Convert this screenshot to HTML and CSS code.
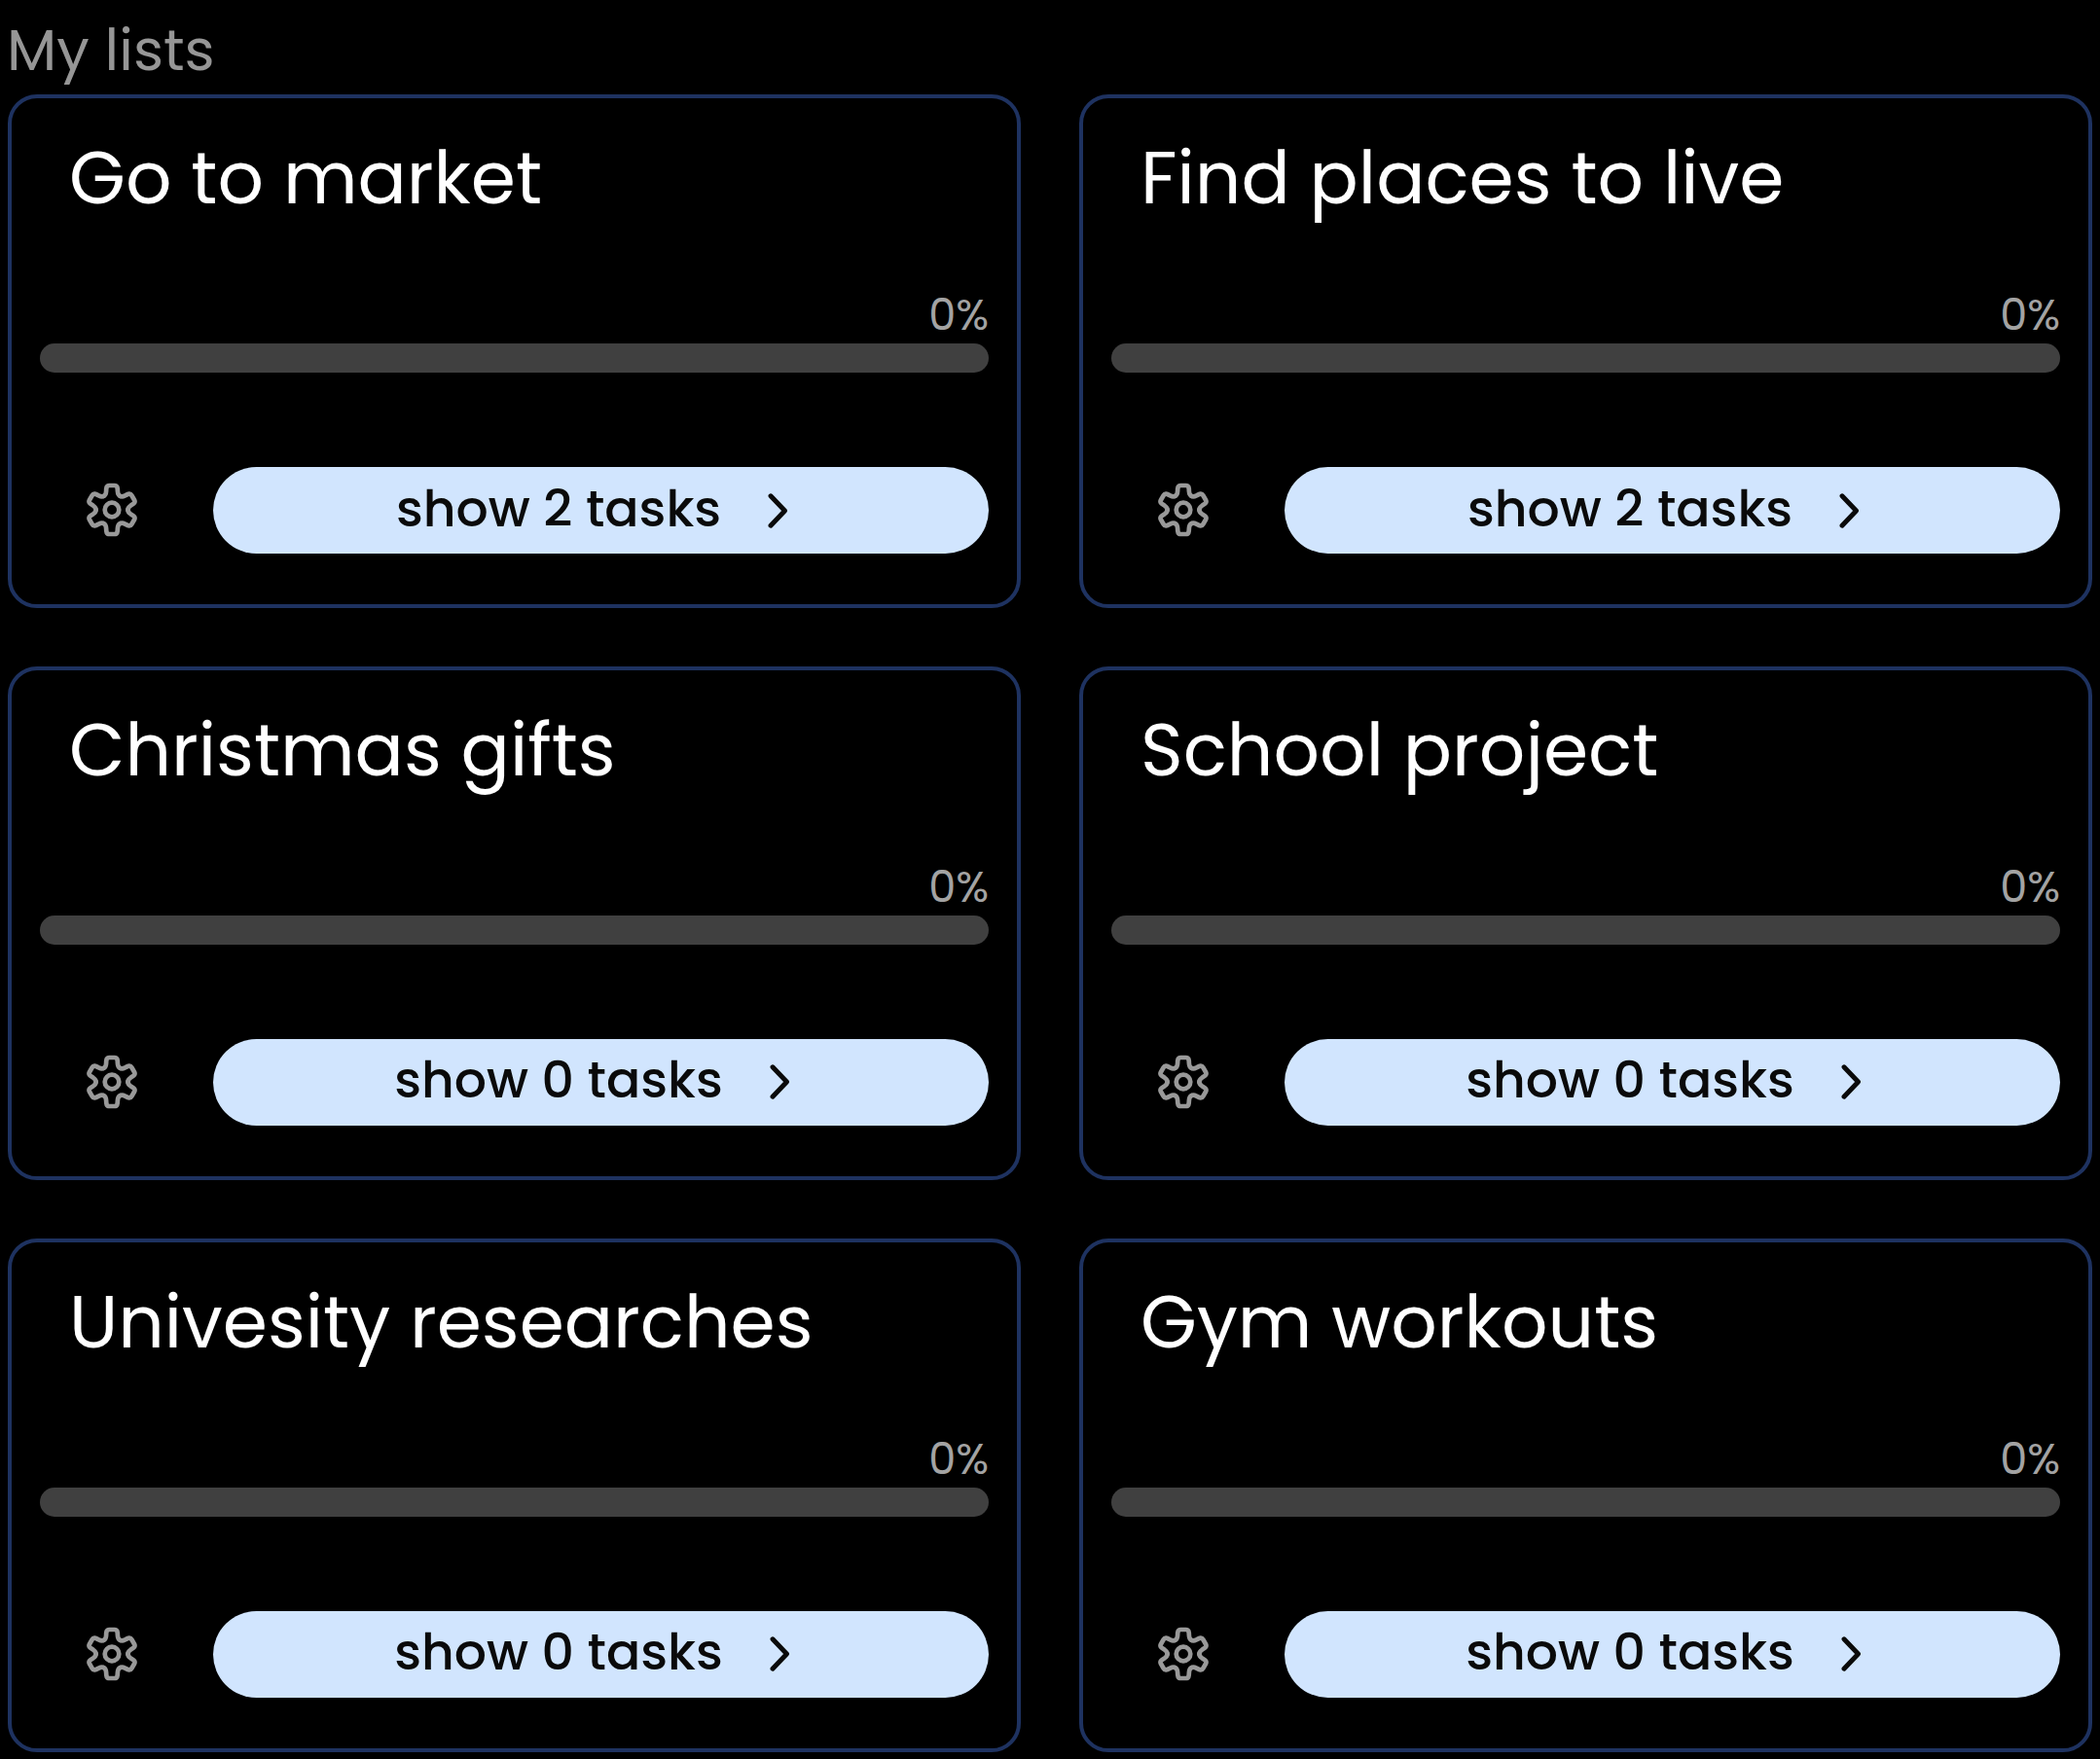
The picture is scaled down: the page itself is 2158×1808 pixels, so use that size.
FILE: index.html
```html
<!DOCTYPE html>
<html lang="en">
<head>
<meta charset="utf-8">
<title>My lists</title>
<link rel="stylesheet" href="styles.css">
</head>
<body>
<svg class="defs" aria-hidden="true">
  <symbol id="gear" viewBox="-30 -30 60 60">
    <g fill="none" stroke="currentColor" stroke-width="4.7" stroke-linecap="round" stroke-linejoin="round">
      <circle r="7.3"/>
      <g id="tooth"><path d="M-8.2-14.2C-6.4-15.2-6-16.9-5.9-19C-5.8-23-5.6-25-2.6-25H2.6C5.6-25 5.8-23 5.9-19C6-16.9 6.4-15.2 8.2-14.2"/></g>
      <use href="#tooth" transform="rotate(60)"/>
      <use href="#tooth" transform="rotate(120)"/>
      <use href="#tooth" transform="rotate(180)"/>
      <use href="#tooth" transform="rotate(240)"/>
      <use href="#tooth" transform="rotate(300)"/>
    </g>
  </symbol>
  <symbol id="chevron" viewBox="0 0 22 36">
    <path d="M3 2.8L17.5 18L3 33.2" fill="none" stroke="currentColor" stroke-width="4.9" stroke-linecap="round" stroke-linejoin="round"/>
  </symbol>
</svg>
<main class="page">
  <h1 class="heading">My lists</h1>
  <section class="lists">
    <article class="card">
      <h2 class="title">Go to market</h2>
      <div class="percent">0%</div>
      <div class="bar"></div>
      <div class="actions"><svg class="gear"><use href="#gear"/></svg><button class="show"><span>show 2 tasks</span><svg class="chevron"><use href="#chevron"/></svg></button></div>
    </article>
    <article class="card">
      <h2 class="title">Find places to live</h2>
      <div class="percent">0%</div>
      <div class="bar"></div>
      <div class="actions"><svg class="gear"><use href="#gear"/></svg><button class="show"><span>show 2 tasks</span><svg class="chevron"><use href="#chevron"/></svg></button></div>
    </article>
    <article class="card">
      <h2 class="title">Christmas gifts</h2>
      <div class="percent">0%</div>
      <div class="bar"></div>
      <div class="actions"><svg class="gear"><use href="#gear"/></svg><button class="show"><span>show 0 tasks</span><svg class="chevron"><use href="#chevron"/></svg></button></div>
    </article>
    <article class="card">
      <h2 class="title">School project</h2>
      <div class="percent">0%</div>
      <div class="bar"></div>
      <div class="actions"><svg class="gear"><use href="#gear"/></svg><button class="show"><span>show 0 tasks</span><svg class="chevron"><use href="#chevron"/></svg></button></div>
    </article>
    <article class="card">
      <h2 class="title">Univesity researches</h2>
      <div class="percent">0%</div>
      <div class="bar"></div>
      <div class="actions"><svg class="gear"><use href="#gear"/></svg><button class="show"><span>show 0 tasks</span><svg class="chevron"><use href="#chevron"/></svg></button></div>
    </article>
    <article class="card">
      <h2 class="title">Gym workouts</h2>
      <div class="percent">0%</div>
      <div class="bar"></div>
      <div class="actions"><svg class="gear"><use href="#gear"/></svg><button class="show"><span>show 0 tasks</span><svg class="chevron"><use href="#chevron"/></svg></button></div>
    </article>
  </section>
</main>
</body>
</html>
```
FILE: styles.css
```css
* { box-sizing: border-box; }
body {
  margin: 0;
  background: #000;
  color: #fff;
  font-family: Poppins, Inter, sans-serif;
  overflow: hidden;
}
.defs { display: none; }
.page { padding: 12px 8px 0; }
.heading {
  margin: 0 0 0 -1px;
  height: 85px;
  line-height: 80px;
  font-size: 59.5px;
  font-weight: 400;
  color: #969696;
}
.lists {
  display: grid;
  grid-template-columns: 1041px 1041px;
  grid-auto-rows: 528px;
  gap: 59.8px 60px;
}
.card {
  display: flex;
  flex-direction: column;
  padding: 36px 29px 0;
  border: 4px solid #1e3260;
  border-radius: 30px;
}
.title {
  margin: 0 0 0 30px;
  height: 164px;
  line-height: 92px;
  font-size: 74.4px;
  font-weight: 400;
  white-space: nowrap;
}
.percent {
  height: 52px;
  line-height: 45px;
  font-size: 44.6px;
  text-align: right;
  color: #a3a3a3;
}
.bar {
  height: 30px;
  border-radius: 15px;
  background: #404040;
}
.actions {
  display: flex;
  align-items: center;
  margin-top: 97px;
}
.gear {
  width: 60px;
  height: 60px;
  margin: 0 74px 1px 44px;
  color: #999;
}
.show {
  display: flex;
  flex: 1;
  align-items: center;
  justify-content: center;
  height: 89px;
  padding: 0 17px 0 0;
  gap: 48px;
  border: 0;
  border-radius: 45px;
  background: #d1e5fe;
  color: #0a0a0a;
  font: inherit;
  font-size: 52.1px;
  font-weight: 500;
  line-height: 76px;
}
.show span { padding-bottom: 4px; }
.chevron { width: 22px; height: 36px; }
```
